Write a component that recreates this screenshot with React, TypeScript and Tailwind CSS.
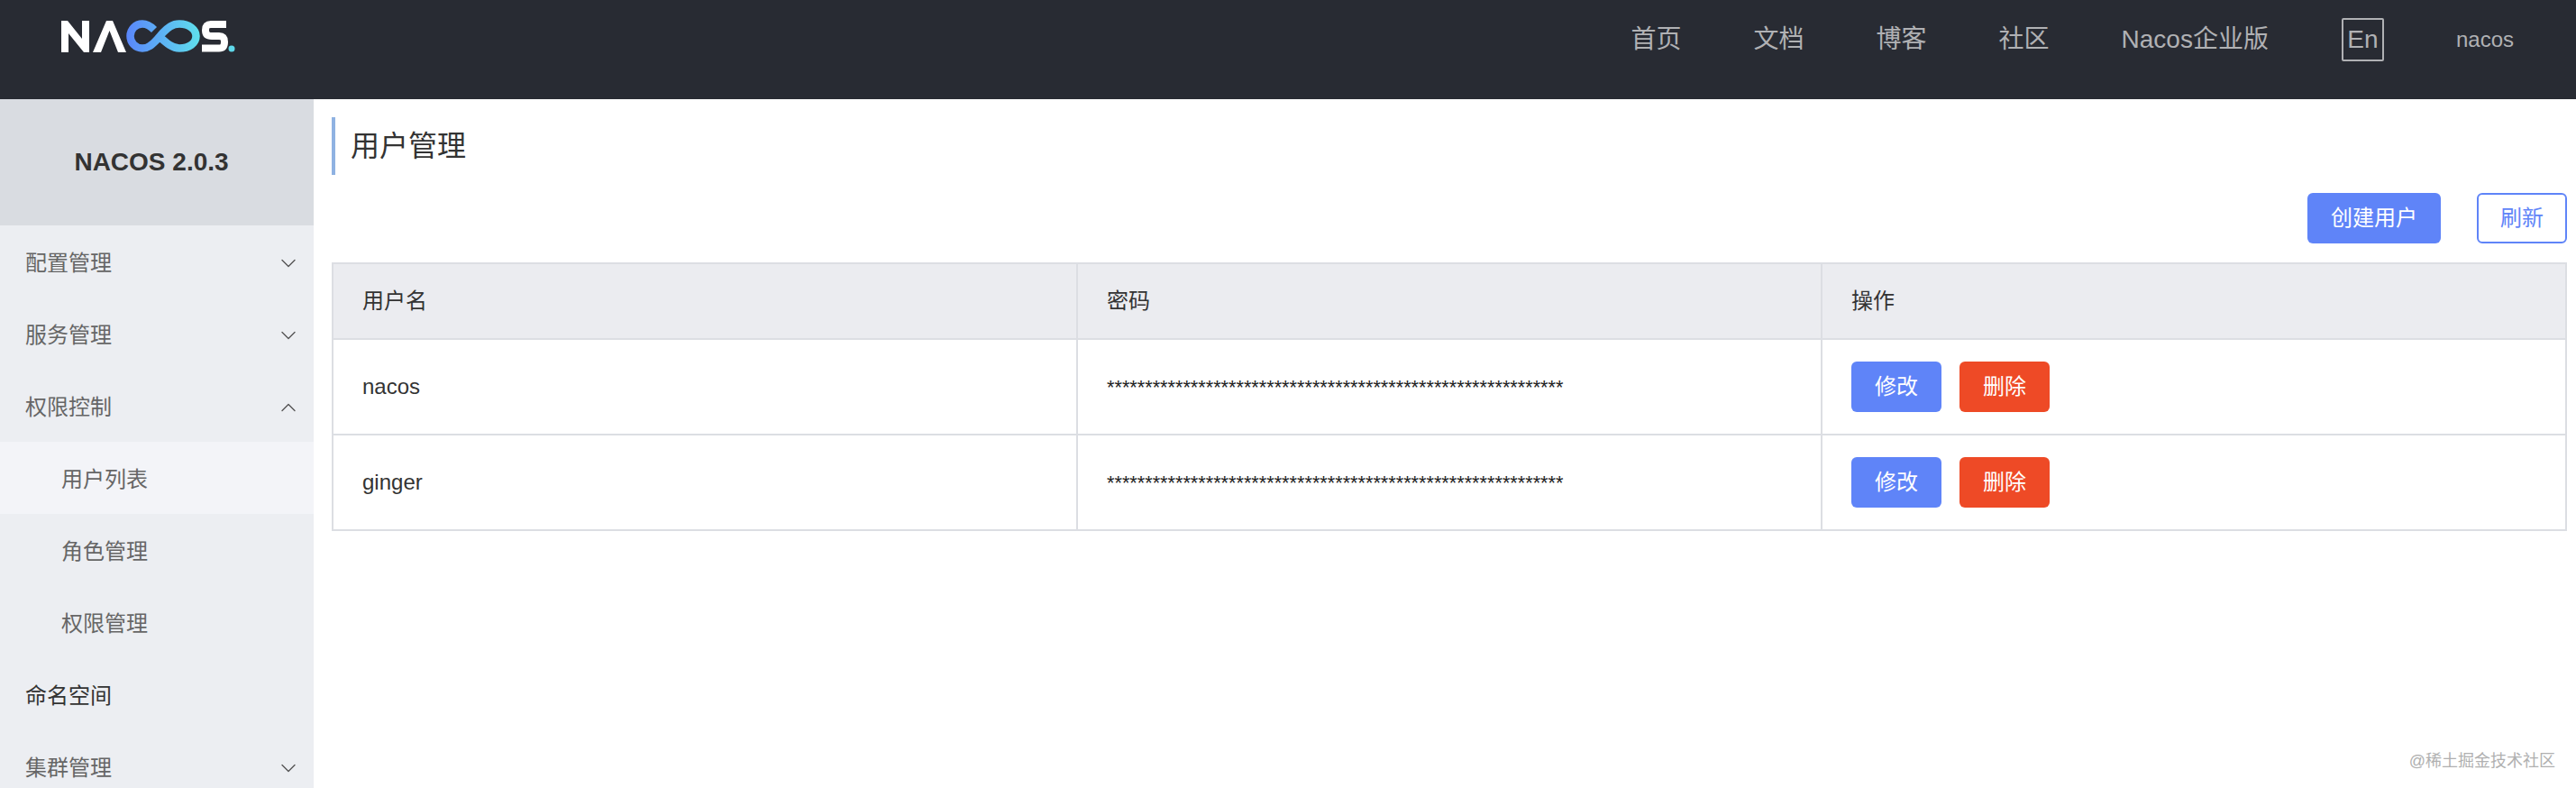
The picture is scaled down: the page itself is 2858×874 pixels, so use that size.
import React from 'react';
import { ChevronDown, ChevronUp } from 'lucide-react';

const font = 'font-["Liberation_Sans","Noto_Sans_CJK_SC",sans-serif]';

const navLinks = ['首页', '文档', '博客', '社区', 'Nacos企业版'];

const users = [
  { name: 'nacos', password: '*'.repeat(60) },
  { name: 'ginger', password: '*'.repeat(60) },
];

function Logo() {
  return (
    <svg width="196" height="37" viewBox="0 0 196 37" fill="none">
      <defs>
        <linearGradient id="loop" x1="72" y1="0" x2="154" y2="0" gradientUnits="userSpaceOnUse">
          <stop offset="0" stopColor="#5a86fb" />
          <stop offset="1" stopColor="#5fe0ec" />
        </linearGradient>
      </defs>
      <path d="M0 1H7L23 21V1H31V36H25L8 15V36H0Z" fill="#fff" />
      <path d="M35 36L50 1H57L72 36H63L53.500 12L44 36Z" fill="#fff" />
      <path
        d="M103 11C99 7 95 4.500 90 4.500C82 4.500 76.500 11 76.500 18C76.500 25 82 31.500 90 31.500C97 31.500 101 27 106 22L113 14C118 9 123 4.500 131 4.500C142 4.500 149.500 11 149.500 18C149.500 26 142 31.500 131 31.500C123 31.500 117 26 108 18"
        stroke="url(#loop)"
        strokeWidth="8.500"
      />
      <path d="M183 5H166Q160 5 160 11.500Q160 18 167 18H175Q181 18 181 24.500Q181 31.500 175 31.500H156" stroke="#fff" strokeWidth="8" />
      <circle cx="189" cy="32" r="3.500" fill="#5fd8ea" />
    </svg>
  );
}

function MenuItem({ label, open, closed, dark }: { label: string; open?: boolean; closed?: boolean; dark?: boolean }) {
  return (
    <div className={`flex h-[80px] items-center justify-between pl-[28px] pr-[14px] pt-[3px] text-[24px] ${dark ? 'text-[#333]' : 'text-[#666]'}`}>
      <span>{label}</span>
      {closed && <ChevronDown size={28} strokeWidth={1.2} color="#555" />}
      {open && <ChevronUp size={28} strokeWidth={1.2} color="#555" />}
    </div>
  );
}

function SubItem({ label, active }: { label: string; active?: boolean }) {
  return (
    <div className={`flex h-[80px] items-center pl-[68px] pt-[3px] text-[24px] text-[#666] ${active ? 'bg-[#f3f4f8]' : ''}`}>
      {label}
    </div>
  );
}

export default function App() {
  return (
    <div className={`relative flex h-[874px] flex-col overflow-hidden bg-white ${font}`}>
      <header className="flex h-[110px] shrink-0 items-start justify-between bg-[#282b33] pl-[68px] pr-[69px]">
        <div className="pt-[22px]">
          <Logo />
        </div>
        <nav className="flex items-center pt-[20px] text-[#b0b1b4]">
          <div className="flex gap-[80px] text-[28px]">
            {navLinks.map((link) => (
              <a key={link}>{link}</a>
            ))}
          </div>
          <span className="ml-[81px] flex h-[48px] w-[47px] items-center justify-center rounded-[2px] border-2 border-[#b0b1b4] text-[28px]">
            En
          </span>
          <span className="ml-[80px] text-[24px]">nacos</span>
        </nav>
      </header>

      <div className="flex flex-1">
        <aside className="w-[348px] shrink-0 bg-[#eceef2]">
          <div className="flex h-[140px] items-center justify-center bg-[#d9dce1] pr-[12px] text-[28px] font-bold text-[#333]">
            NACOS 2.0.3
          </div>
          <MenuItem label="配置管理" closed />
          <MenuItem label="服务管理" closed />
          <MenuItem label="权限控制" open />
          <SubItem label="用户列表" active />
          <SubItem label="角色管理" />
          <SubItem label="权限管理" />
          <MenuItem label="命名空间" dark />
          <MenuItem label="集群管理" closed />
        </aside>

        <main className="flex-1 pl-[20px] pr-[10px] pt-[20px]">
          <h1 className="flex h-[64px] items-center border-l-4 border-[#8fb2e2] pl-[17px] text-[32px] font-normal text-[#333]">
            用户管理
          </h1>
          <div className="mt-[20px] flex justify-end gap-[40px] text-[24px]">
            <button className="h-[56px] w-[148px] rounded-[6px] bg-[#5f84f8] text-white">创建用户</button>
            <button className="h-[56px] w-[100px] rounded-[6px] border-2 border-[#5f84f8] text-[#5f84f8]">刷新</button>
          </div>
          <table className="mt-[21px] w-full table-fixed border-collapse border-2 border-[#dcdee3] text-[24px] text-[#333]">
            <thead>
              <tr className="h-[84px] bg-[#ebecf0] text-left">
                <th className="border-2 border-[#dcdee3] px-[32px] font-normal">用户名</th>
                <th className="border-2 border-[#dcdee3] px-[32px] font-normal">密码</th>
                <th className="border-2 border-[#dcdee3] px-[32px] font-normal">操作</th>
              </tr>
            </thead>
            <tbody>
              {users.map((user) => (
                <tr key={user.name} className="h-[106px]">
                  <td className="border-2 border-[#dcdee3] px-[32px]">{user.name}</td>
                  <td className="border-2 border-[#dcdee3] px-[32px]">
                    <span className="text-[21.7px] text-[#222]">{user.password}</span>
                  </td>
                  <td className="border-2 border-[#dcdee3] px-[32px]">
                    <div className="flex gap-[20px] text-white">
                      <button className="h-[56px] w-[100px] rounded-[6px] bg-[#5f84f8]">修改</button>
                      <button className="h-[56px] w-[100px] rounded-[6px] bg-[#ee4a26]">删除</button>
                    </div>
                  </td>
                </tr>
              ))}
            </tbody>
          </table>
        </main>
      </div>

      <span className="absolute bottom-[16px] right-[23px] text-[18px] text-[#b0b0b0]">@稀土掘金技术社区</span>
    </div>
  );
}
